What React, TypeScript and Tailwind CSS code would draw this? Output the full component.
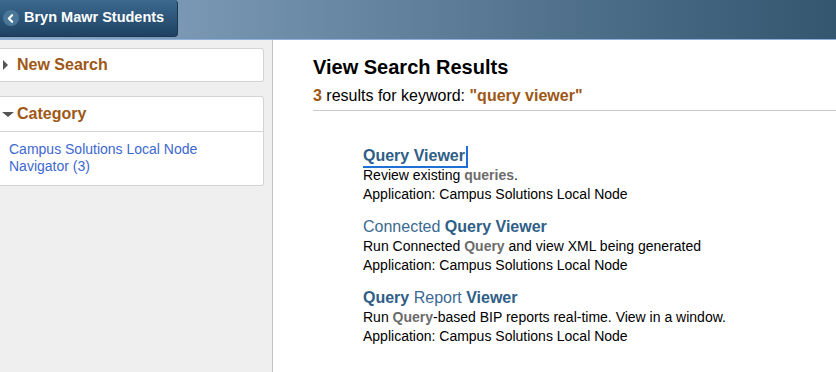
import { ChevronLeft } from 'lucide-react';

type Part = { text: string; bold?: boolean };

type Result = {
  title: Part[];
  desc: Part[];
  focused?: boolean;
};

const results: Result[] = [
  {
    title: [{ text: 'Query Viewer', bold: true }],
    desc: [{ text: 'Review existing ' }, { text: 'queries', bold: true }, { text: '.' }],
    focused: true,
  },
  {
    title: [{ text: 'Connected ' }, { text: 'Query Viewer', bold: true }],
    desc: [{ text: 'Run Connected ' }, { text: 'Query', bold: true }, { text: ' and view XML being generated' }],
  },
  {
    title: [{ text: 'Query', bold: true }, { text: ' Report ' }, { text: 'Viewer', bold: true }],
    desc: [{ text: 'Run ' }, { text: 'Query', bold: true }, { text: '-based BIP reports real-time. View in a window.' }],
  },
];

function Header() {
  return (
    <div className="h-[40px] bg-gradient-to-r from-[#8eabc8] to-[#34566f] border-b border-[#8fb0dc]">
      <button className="h-[37px] w-[178px] flex items-center gap-[5px] pl-[3px] rounded-br-[4px] rounded-tr-[4px] border border-l-0 border-t-0 border-[#1b3652] bg-gradient-to-b from-[#3c6a90] to-[#1f4262]">
        <span className="w-[16px] h-[16px] rounded-full bg-[#4a7698] flex items-center justify-center">
          <ChevronLeft size={13} strokeWidth={4} className="text-white -ml-[1px]" />
        </span>
        <span className="text-white font-bold text-[14.5px]">Bryn Mawr Students</span>
      </button>
    </div>
  );
}

function Sidebar() {
  return (
    <div className="w-[273px] bg-[#efefef] border-r border-[#c3c3c3] pt-[8px] pr-[8px] flex flex-col gap-[14px]">
      <div className="h-[34px] bg-white border border-l-0 border-[#d3d3d3] rounded-r-[3px] flex items-center pl-[3px]">
        <span className="w-0 h-0 border-y-[5px] border-y-transparent border-l-[5px] border-l-[#555]" />
        <span className="ml-[9px] text-[16px] font-bold text-[#9e5816]">New Search</span>
      </div>
      <div className="bg-white border border-l-0 border-[#d3d3d3] rounded-r-[3px]">
        <div className="h-[35px] flex items-center border-b border-[#d3d3d3]">
          <span className="w-0 h-0 border-x-[6px] border-x-transparent border-t-[5px] border-t-[#555] ml-[2px]" />
          <span className="ml-[3px] text-[16px] font-bold text-[#9e5816]">Category</span>
        </div>
        <div className="px-[9px] pt-[9px] pb-[10px] text-[14px] leading-[17px] text-[#3d68d0]">
          Campus Solutions Local Node
          <br />
          Navigator (3)
        </div>
      </div>
    </div>
  );
}

function ResultItem({ r }: { r: Result }) {
  return (
    <div className="flex flex-col">
      <div className="flex">
        <span
          className={
            'text-[16px] leading-[20px] text-[#3a6a92] ' +
            (r.focused ? 'border-b-2 border-r-2 border-[#1f6fd8] pr-[1px] -mb-[2px]' : '')
          }
        >
          {r.title.map((p, i) => (
            <span key={i} className={p.bold ? 'font-bold text-[#2f5e86]' : ''}>
              {p.text}
            </span>
          ))}
        </span>
      </div>
      <div className="text-[14px] leading-[19px] text-black">
        {r.desc.map((p, i) => (
          <span key={i} className={p.bold ? 'font-bold text-[#6b6b6b]' : ''}>
            {p.text}
          </span>
        ))}
      </div>
      <div className="text-[14px] leading-[19px] text-black">Application: Campus Solutions Local Node</div>
    </div>
  );
}

export default function App() {
  return (
    <div className="w-[836px] h-[372px] overflow-hidden bg-white font-['Liberation_Sans',Arial,sans-serif]">
      <Header />
      <div className="flex h-[332px]">
        <Sidebar />
        <div className="flex-1 pl-[40px] pt-[13px]">
          <h1 className="text-[20px] font-bold text-black leading-[28px]">View Search Results</h1>
          <div className="mt-[6px] text-[16px] leading-[18px] text-black border-b border-[#c8c8c8] pb-[5px]">
            <span className="font-bold text-[#9e5816]">3</span> results for keyword:{' '}
            <span className="font-bold text-[#9e5816]">"query viewer"</span>
          </div>
          <div className="pl-[50px] pt-[35px] flex flex-col gap-[13px]">
            {results.map((r, i) => (
              <ResultItem key={i} r={r} />
            ))}
          </div>
        </div>
      </div>
    </div>
  );
}
